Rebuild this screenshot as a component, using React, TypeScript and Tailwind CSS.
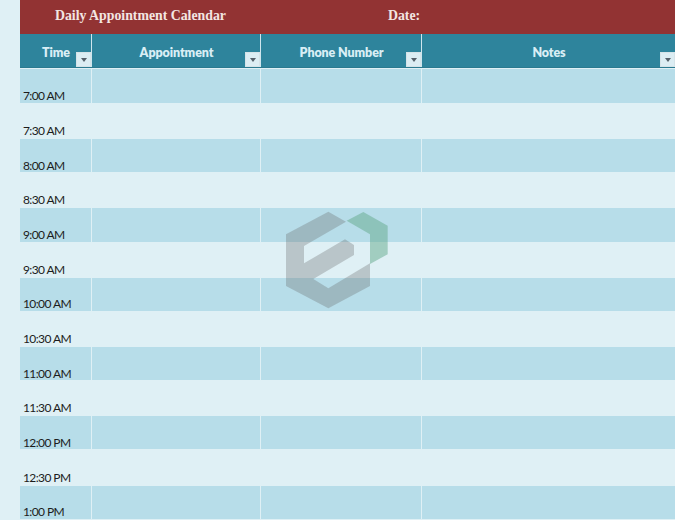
const rows: [string, string, string][] = [
  ["7:00 AM", "h-[34px] bg-[#b7dde9]", "mb-0"],
  ["7:30 AM", "h-[36px]", "mb-[1px]"],
  ["8:00 AM", "h-[33px] bg-[#b7dde9]", "-mb-[1px]"],
  ["8:30 AM", "h-[36px]", "mb-[1px]"],
  ["9:00 AM", "h-[34px] bg-[#b7dde9]", "mb-0"],
  ["9:30 AM", "h-[36px]", "mb-[1px]"],
  ["10:00 AM", "h-[33px] bg-[#b7dde9]", "mb-0"],
  ["10:30 AM", "h-[36px]", "mb-[1px]"],
  ["11:00 AM", "h-[33px] bg-[#b7dde9]", "-mb-[1px]"],
  ["11:30 AM", "h-[36px]", "mb-[1px]"],
  ["12:00 PM", "h-[33px] bg-[#b7dde9]", "-mb-[1px]"],
  ["12:30 PM", "h-[37px]", "mb-[1px]"],
  ["1:00 PM", "h-[33px] bg-[#b7dde9]", "mb-0"],
];

function Filter() {
  return (
    <span className="absolute right-0 bottom-0 flex h-[15px] w-[15px] items-center justify-center border border-[#d5e3e8] bg-[#dcedf3]">
      <span className="h-0 w-0 border-x-[3.5px] border-t-[4px] border-x-transparent border-t-[#55606a]" />
    </span>
  );
}

function Head({ label, className }: { label: string; className: string }) {
  return (
    <div className={`relative flex items-center justify-center pt-[5px] pl-[1px] text-[12.5px] font-extrabold tracking-[-0.1px] text-[#d9eef5] ${className}`}>
      {label}
      <Filter />
    </div>
  );
}

export default function App() {
  return (
    <div className="relative h-[520px] w-[675px] overflow-hidden bg-[#dff0f5] pl-[20px] font-['Lato','Liberation_Sans',sans-serif]">
      <div className="flex h-[34px] items-center bg-[#923333] pb-[1px] font-['Liberation_Serif',serif] text-[13.8px] font-bold text-[#f3e6e2]">
        <span className="ml-[35px] w-[333px]">Daily Appointment Calendar</span>
        <span>Date:</span>
      </div>
      <div className="flex h-[34px] border-b border-[#2a7a90] bg-[#2e849c]">
        <Head label="Time" className="w-[71px]" />
        <div className="w-[1px] bg-[#cfe6ee]" />
        <Head label="Appointment" className="w-[168px]" />
        <div className="w-[1px] bg-[#cfe6ee]" />
        <Head label="Phone Number" className="w-[160px]" />
        <div className="w-[1px] bg-[#cfe6ee]" />
        <Head label="Notes" className="flex-1" />
      </div>
      <div className="h-[1px] bg-[#dff0f5]" />
      {rows.map(([time, rowClass, textClass]) => {
        const line = rowClass.includes("bg-") ? "bg-[#dff0f5]" : "";
        return (
          <div key={time} className={`flex ${rowClass}`}>
            <div className="flex w-[71px] items-end pl-[3px] text-[12px] leading-[15px] tracking-[-0.6px] text-[#1c1c1c]">
              <span className={textClass}>{time}</span>
            </div>
            <div className={`w-[1px] ${line}`} />
            <div className="w-[168px]" />
            <div className={`w-[1px] ${line}`} />
            <div className="w-[160px]" />
            <div className={`w-[1px] ${line}`} />
            <div className="flex-1" />
          </div>
        );
      })}
      <svg className="absolute left-[270px] top-[200px]" width="130" height="120" viewBox="0 0 390 360">
        <polygon
          fill="#646464"
          fillOpacity="0.3"
          points="175,35 228,65 102,138 102,190 225,118 252,135 252,165 130,237 175,265 300,190 300,258 175,325 48,258 48,103"
        />
        <polygon
          fill="#64aa8c"
          fillOpacity="0.5"
          points="230,62 280,36 353,77 353,163 300,192 300,103"
        />
      </svg>
    </div>
  );
}
